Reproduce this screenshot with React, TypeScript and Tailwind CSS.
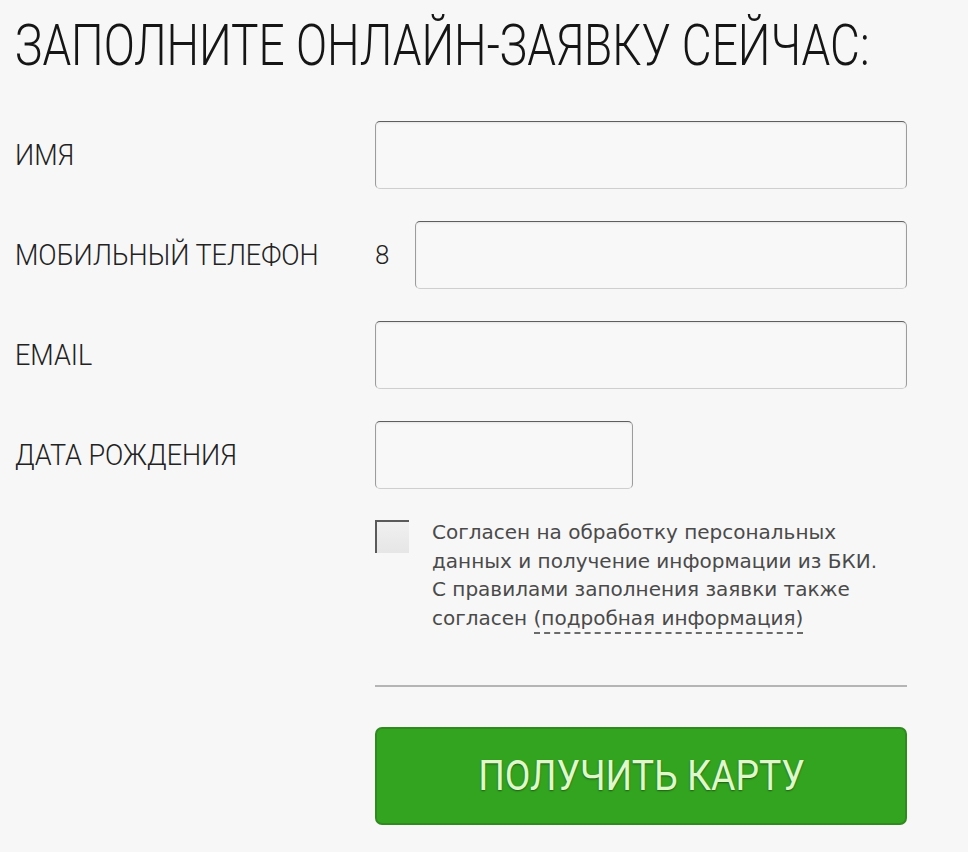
import React from "react";

const capsFont = { fontFamily: "Roboto, 'Liberation Sans', sans-serif" };

function Field({ className }: { className: string }) {
  return (
    <div
      className={`h-[68px] rounded-[5px] border border-[#9c9c9c] border-t-[#5f5f5f] border-b-[#cfcfcf] bg-[#f8f8f8] shadow-[inset_0_1px_2px_rgba(0,0,0,0.08)] ${className}`}
    />
  );
}

function Label({ children }: { children: React.ReactNode }) {
  return (
    <span className="inline-block origin-left scale-x-[0.9] whitespace-nowrap font-['Roboto','Liberation_Sans',sans-serif] text-[30px] font-light leading-none text-[#222]">
      {children}
    </span>
  );
}

export default function App() {
  return (
    <div className="min-h-screen overflow-hidden bg-[#f7f7f7] pl-[15px] pt-[16px]">
      <h1
        style={capsFont}
        className="inline-block origin-left scale-x-[0.793] whitespace-nowrap text-[58px] font-light leading-none text-[#151515]"
      >
        ЗАПОЛНИТЕ ОНЛАЙН-ЗАЯВКУ СЕЙЧАС:
      </h1>

      {/* Fields */}
      <div className="mt-[47px] grid w-[892px] grid-cols-[360px_532px] items-center gap-y-8">
        <Label>ИМЯ</Label>
        <Field className="w-full" />

        <Label>МОБИЛЬНЫЙ ТЕЛЕФОН</Label>
        <div className="flex items-center">
          <span className="w-10 font-['Roboto','Liberation_Sans',sans-serif] text-[26px] font-light text-[#222]">
            8
          </span>
          <Field className="flex-1" />
        </div>

        <Label>EMAIL</Label>
        <Field className="w-full" />

        <Label>ДАТА РОЖДЕНИЯ</Label>
        <Field className="w-[258px]" />
      </div>

      {/* Agreement + submit */}
      <div className="ml-[360px] w-[532px]">
        <div className="mt-[31px] flex items-start gap-[23px]">
          <div className="h-[33px] w-[34px] shrink-0 border-l-2 border-t-2 border-[#5a5a5a] bg-gradient-to-b from-[#f0f0f0] to-[#e6e6e6]" />
          <p className="-mt-[2px] font-['DejaVu_Sans',sans-serif] text-[20px] leading-[28.5px] text-[#4a4a4a]">
            Согласен на обработку персональных
            <br />
            данных и получение информации из БКИ.
            <br />
            С правилами заполнения заявки также
            <br />
            согласен{" "}
            <span className="border-b-2 border-dashed border-[#6a6a6a] pb-[2px]">
              (подробная информация)
            </span>
          </p>
        </div>

        <div className="mt-[53px] h-[2px] bg-[#b5b5b5]" />

        <button className="mt-[40px] flex h-[98px] w-full items-center justify-center rounded-[7px] border-2 border-[#2f8a20] bg-[#33a420]">
          <span
            style={capsFont}
            className="inline-block scale-x-[0.89] text-[42px] leading-none text-[#dff7c9] [text-shadow:0_1px_2px_rgba(0,0,0,0.45)]"
          >
            ПОЛУЧИТЬ КАРТУ
          </span>
        </button>
      </div>
    </div>
  );
}
